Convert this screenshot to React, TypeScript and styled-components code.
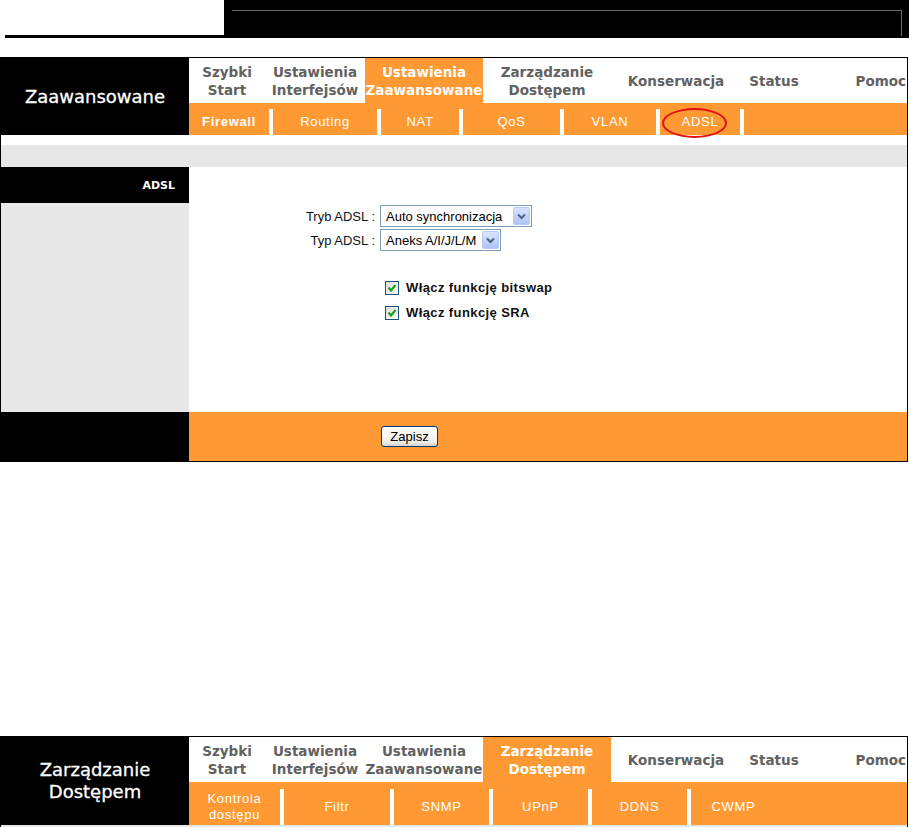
import React from 'react';
import styled, { createGlobalStyle, css } from 'styled-components';

const ORANGE = '#ff9933';
const SIDE = 189;

const GlobalStyle = createGlobalStyle`
  html, body {
    margin: 0;
    padding: 0;
    background: #fff;
    overflow: hidden;
  }
  body {
    font-family: 'Liberation Sans', Arial, sans-serif;
  }
`;

interface TopItem {
  label: string[];
  width?: number;
}

interface SubItemData {
  label: string[];
  width: number;
  bold?: boolean;
  circled?: boolean;
}

const topNav: TopItem[] = [
  { label: ['Szybki', 'Start'], width: 76 },
  { label: ['Ustawienia', 'Interfejsów'], width: 100 },
  { label: ['Ustawienia', 'Zaawansowane'], width: 118 },
  { label: ['Zarządzanie', 'Dostępem'], width: 128 },
  { label: ['Konserwacja'], width: 130 },
  { label: ['Status'], width: 66 },
  { label: ['Pomoc'] },
];

const advancedSub: SubItemData[] = [
  { label: ['Firewall'], width: 80, bold: true },
  { label: ['Routing'], width: 108 },
  { label: ['NAT'], width: 82 },
  { label: ['QoS'], width: 101 },
  { label: ['VLAN'], width: 96 },
  { label: ['ADSL'], width: 84, circled: true },
];

const accessSub: SubItemData[] = [
  { label: ['Kontrola', 'dostępu'], width: 91 },
  { label: ['Filtr'], width: 110 },
  { label: ['SNMP'], width: 99 },
  { label: ['UPnP'], width: 99 },
  { label: ['DDNS'], width: 99 },
  { label: ['CWMP'], width: 89 },
];

const App: React.FC = () => {
  return (
    <>
      <GlobalStyle />
      <TopBar>
        <LogoArea>
          <LogoLine />
        </LogoArea>
        <DarkArea>
          <Frame />
        </DarkArea>
      </TopBar>

      <Panel $top={19}>
        <Header
          title={['Zaawansowane']}
          active={2}
          sub={advancedSub}
          subHeight={32}
          subPad={6}
          tailSeparator
        />
        <Row $h={10} />
        <GrayStrip />
        <Row $h={36}>
          <Side $tone="dark">
            <SectionTitle>ADSL</SectionTitle>
          </Side>
          <div />
        </Row>
        <Row $h={209}>
          <Side $tone="light" />
          <FormArea>
            <FieldGrid>
              <FieldLabel>Tryb ADSL :</FieldLabel>
              <Select $w={152}>
                <span>Auto synchronizacja</span>
                <SelectArrow>
                  <Chevron />
                </SelectArrow>
              </Select>
              <FieldLabel>Typ ADSL :</FieldLabel>
              <Select $w={121}>
                <span>Aneks A/I/J/L/M</span>
                <SelectArrow>
                  <Chevron />
                </SelectArrow>
              </Select>
            </FieldGrid>
            <Checks>
              <CheckRow>
                <CheckBox>
                  <Tick />
                </CheckBox>
                <CheckLabel>Włącz funkcję bitswap</CheckLabel>
              </CheckRow>
              <CheckRow>
                <CheckBox>
                  <Tick />
                </CheckBox>
                <CheckLabel>Włącz funkcję SRA</CheckLabel>
              </CheckRow>
            </Checks>
          </FormArea>
        </Row>
        <Row $h={49}>
          <Side $tone="dark" />
          <FooterBar>
            <SaveButton type="button">Zapisz</SaveButton>
          </FooterBar>
        </Row>
      </Panel>

      <Panel $top={274}>
        <Header
          title={['Zarządzanie', 'Dostępem']}
          active={3}
          sub={accessSub}
          subHeight={43}
          subPad={7}
        />
        <GrayStrip />
      </Panel>
    </>
  );
};

export default App;

interface HeaderProps {
  title: string[];
  active: number;
  sub: SubItemData[];
  subHeight: number;
  subPad: number;
  tailSeparator?: boolean;
}

const Header: React.FC<HeaderProps> = ({
  title,
  active,
  sub,
  subHeight,
  subPad,
  tailSeparator,
}) => (
  <HeaderGrid>
    <SideTitle>
      {title.map(t => (
        <div key={t}>{t}</div>
      ))}
    </SideTitle>
    <NavColumn>
      <TopNav>
        {topNav.map((item, i) => (
          <TopNavItem
            key={item.label.join(' ')}
            $w={item.width}
            $active={i === active}
          >
            {item.label.map(l => (
              <div key={l}>{l}</div>
            ))}
          </TopNavItem>
        ))}
      </TopNav>
      <SubNav $h={subHeight} $pad={subPad}>
        {sub.map((item, i) => (
          <SubItem
            key={item.label.join(' ')}
            $w={item.width}
            $sep={i > 0}
            $bold={item.bold}
          >
            {item.label.map(l => (
              <div key={l}>{l}</div>
            ))}
            {item.circled && <Circle />}
          </SubItem>
        ))}
        <SubTail $sep={!!tailSeparator} />
      </SubNav>
    </NavColumn>
  </HeaderGrid>
);

const Chevron = () => (
  <svg width="9" height="7" viewBox="0 0 9 7">
    <polyline
      points="1,1.5 4.5,5 8,1.5"
      fill="none"
      stroke="#4d6185"
      strokeWidth="2"
    />
  </svg>
);

const Tick = () => (
  <svg width="10" height="10" viewBox="0 0 10 10">
    <polyline
      points="1.5,4.5 4,7.5 8.5,2"
      fill="none"
      stroke="#21a121"
      strokeWidth="2.2"
    />
  </svg>
);

const TopBar = styled.div`
  display: flex;
  height: 38px;
`;

const LogoArea = styled.div`
  width: 224px;
  display: flex;
  flex-direction: column;
  justify-content: flex-end;
  background: #fff;
`;

const LogoLine = styled.div`
  height: 3px;
  margin-left: 5px;
  background: #000;
`;

const DarkArea = styled.div`
  flex: 1;
  background: #000;
  padding: 10px 7px 0 8px;
`;

const Frame = styled.div`
  height: 25px;
  border-top: 1px solid #6b6b6b;
  border-right: 1px solid #6b6b6b;
`;

const Panel = styled.div<{ $top: number }>`
  width: 908px;
  box-sizing: border-box;
  margin-top: ${p => p.$top}px;
  border: 1px solid #000;
`;

const HeaderGrid = styled.div`
  display: grid;
  grid-template-columns: ${SIDE - 1}px 1fr;
`;

const SideTitle = styled.div`
  background: #000;
  color: #fff;
  font-family: 'DejaVu Sans', Verdana, sans-serif;
  font-size: 18px;
  line-height: 22px;
  text-align: center;
  display: flex;
  flex-direction: column;
  justify-content: center;
  -webkit-text-stroke: 0.3px #fff;
`;

const NavColumn = styled.div`
  display: flex;
  flex-direction: column;
`;

const TopNav = styled.div`
  display: flex;
  height: 45px;
  background: #fff;
`;

const TopNavItem = styled.div<{ $w?: number; $active?: boolean }>`
  display: flex;
  flex-direction: column;
  justify-content: center;
  text-align: center;
  white-space: nowrap;
  font-family: 'DejaVu Sans', Verdana, sans-serif;
  font-weight: bold;
  font-size: 13.5px;
  line-height: 18px;
  color: #616161;
  ${p =>
    p.$w
      ? css`
          width: ${p.$w}px;
        `
      : css`
          flex: 1;
          text-align: right;
          padding-right: 1px;
        `}
  ${p =>
    p.$active &&
    css`
      background: ${ORANGE};
      color: #fff;
    `}
`;

const SubNav = styled.div<{ $h: number; $pad: number }>`
  display: flex;
  box-sizing: border-box;
  height: ${p => p.$h}px;
  padding-top: ${p => p.$pad}px;
  background: ${ORANGE};
`;

const SubItem = styled.div<{ $w: number; $sep: boolean; $bold?: boolean }>`
  position: relative;
  box-sizing: border-box;
  width: ${p => p.$w}px;
  display: flex;
  flex-direction: column;
  justify-content: center;
  text-align: center;
  color: #fff;
  font-family: 'Liberation Sans', Arial, sans-serif;
  font-size: 13px;
  line-height: 16px;
  letter-spacing: 0.7px;
  font-weight: ${p => (p.$bold ? 'bold' : 'normal')};
  border-left: ${p => (p.$sep ? '4px solid #fff' : 'none')};
`;

const SubTail = styled.div<{ $sep: boolean }>`
  flex: 1;
  border-left: ${p => (p.$sep ? '4px solid #fff' : 'none')};
`;

const Circle = styled.span`
  position: absolute;
  left: 2px;
  top: -1px;
  width: 65px;
  height: 30px;
  box-sizing: border-box;
  border: 2px solid #e01010;
  border-radius: 50%;
`;

const Row = styled.div<{ $h: number }>`
  display: grid;
  grid-template-columns: ${SIDE - 1}px 1fr;
  height: ${p => p.$h}px;
`;

const GrayStrip = styled.div`
  height: 22px;
  background: #e6e6e6;
`;

const Side = styled.div<{ $tone: 'dark' | 'light' }>`
  background: ${p => (p.$tone === 'dark' ? '#000' : '#e8e8e8')};
  display: flex;
  align-items: center;
  justify-content: flex-end;
  padding-right: 14px;
`;

const SectionTitle = styled.div`
  color: #fff;
  font-family: 'DejaVu Sans', Verdana, sans-serif;
  font-weight: bold;
  font-size: 11px;
`;

const FormArea = styled.div`
  padding-top: 2px;
`;

const FieldGrid = styled.div`
  display: grid;
  grid-template-columns: 186px auto;
  justify-content: start;
  align-items: center;
  column-gap: 5px;
  row-gap: 2px;
`;

const FieldLabel = styled.div`
  text-align: right;
  font-size: 13px;
  color: #111;
`;

const Select = styled.div<{ $w: number }>`
  box-sizing: border-box;
  width: ${p => p.$w}px;
  height: 22px;
  display: flex;
  align-items: center;
  justify-content: space-between;
  padding: 0 1px 0 5px;
  border: 1px solid #7f9db9;
  background: #fff;
  font-size: 13px;
  color: #000;
  white-space: nowrap;
`;

const SelectArrow = styled.span`
  box-sizing: border-box;
  width: 17px;
  height: 18px;
  display: flex;
  align-items: center;
  justify-content: center;
  border: 1px solid #b6c9f5;
  border-radius: 2px;
  background: linear-gradient(#d9e3fd, #aec3f5);
`;

const Checks = styled.div`
  display: flex;
  flex-direction: column;
  gap: 10px;
  margin-top: 29px;
  padding-left: 196px;
`;

const CheckRow = styled.div`
  display: flex;
  align-items: center;
  gap: 7px;
`;

const CheckBox = styled.span`
  box-sizing: border-box;
  width: 14px;
  height: 14px;
  display: flex;
  align-items: center;
  justify-content: center;
  border: 1px solid #1c5180;
  background: linear-gradient(135deg, #dcdcd7, #fff);
`;

const CheckLabel = styled.span`
  font-size: 13px;
  font-weight: bold;
  letter-spacing: 0.4px;
  color: #111;
`;

const FooterBar = styled.div`
  background: ${ORANGE};
  display: flex;
  align-items: center;
  padding-left: 192px;
`;

const SaveButton = styled.button`
  box-sizing: border-box;
  width: 57px;
  height: 21px;
  padding: 0;
  border: 1px solid #003c74;
  border-radius: 3px;
  background: linear-gradient(#fff, #efeee9 80%, #d8d2c6);
  font-family: 'Liberation Sans', Arial, sans-serif;
  font-size: 13px;
  color: #000;
`;
